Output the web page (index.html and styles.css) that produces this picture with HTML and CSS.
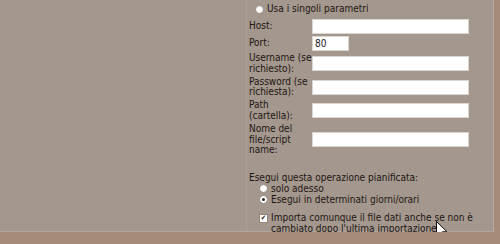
FILE: index.html
```html
<!DOCTYPE html>
<html>
<head>
    <title>Importazione pianificata</title>
    <link rel="stylesheet" href="styles.css">
</head>
<body>
    <div class="page">
        <div class="side"></div>
        <div class="panel">
            <label class="choice top-choice"><span class="radio"></span>Usa i singoli parametri</label>
            <div class="fields">
                <label class="field-label" for="host">Host:</label>
                <input class="text-in" type="text" id="host">
                <label class="field-label" for="port">Port:</label>
                <div><input class="text-in port-in" type="text" id="port" value="80"></div>
                <label class="field-label" for="user">Username (se richiesto):</label>
                <input class="text-in" type="text" id="user">
                <label class="field-label" for="pass">Password (se richiesta):</label>
                <input class="text-in" type="text" id="pass">
                <label class="field-label" for="path">Path (cartella):</label>
                <input class="text-in" type="text" id="path">
                <label class="field-label" for="script">Nome del file/script name:</label>
                <input class="text-in" type="text" id="script">
            </div>

            <div class="schedule">
                <div class="schedule-title">Esegui questa operazione pianificata:</div>
                <label class="choice"><span class="radio"></span>solo adesso</label>
                <label class="choice"><span class="radio checked"></span>Esegui in determinati giorni/orari</label>
            </div>

            <label class="choice check-row"><span class="checkbox">&#10004;</span><span>Importa comunque il file dati anche se non è cambiato dopo l'ultima importazione</span></label>
        </div>
        <svg class="cursor" width="12" height="19" viewBox="0 0 12 19">
            <path d="M0.5 0.5 L0.5 15 L4 11.6 L6.6 17.5 L8.8 16.5 L6.3 10.8 L11 10.8 Z" fill="#fff" stroke="#111" stroke-width="1"/>
        </svg>
    </div>
</body>
</html>
```

FILE: styles.css
```css
body { margin: 0; background: #a68b78; font-family: "DejaVu Sans Condensed", "DejaVu Sans", sans-serif; font-size: 10px; color: #1c1612; }
.page { position: relative; display: flex; width: 493px; height: 231px; background: #a4978e; border-right: 1px solid #b3a79e; border-bottom: 1px solid #b3a79e; }
.side { width: 246px; }
.panel { flex: 1; border-left: 1px solid #ada197; padding: 3px 0 0 2px; line-height: 10.8px; }

.choice { display: flex; align-items: center; }
.top-choice { padding-left: 6px; height: 12px; margin-bottom: 4px; }
.radio { width: 9px; height: 9px; border-radius: 50%; background: #fff; border: 1px solid #8f857e; box-sizing: border-box; margin-right: 3px; position: relative; }
.radio.checked::after { content: ""; position: absolute; left: 2px; top: 2px; width: 3px; height: 3px; border-radius: 50%; background: #222; }

.fields { display: grid; grid-template-columns: 63px 157px; row-gap: 2px; align-items: center; }
.field-label { width: 63px; }
.text-in { display: block; box-sizing: border-box; width: 157px; height: 15px; margin: 0; padding: 0 2px; border: 1px solid #dcd6d1; background: #fff; font: inherit; color: #222; }
.port-in { width: 37px; }

.schedule { margin-top: 16px; line-height: 11px; }
.schedule .choice { padding-left: 10px; }
.check-row { align-items: flex-start; padding-left: 10px; margin-top: 8px; width: 215px; }
.checkbox { flex: none; width: 9px; height: 9px; margin: 1px 3px 0 0; background: #fff; border: 1px solid #8f857e; box-sizing: border-box; font-size: 7px; line-height: 7px; text-align: center; color: #222; }

.cursor { position: absolute; left: 436px; top: 221px; }
```
